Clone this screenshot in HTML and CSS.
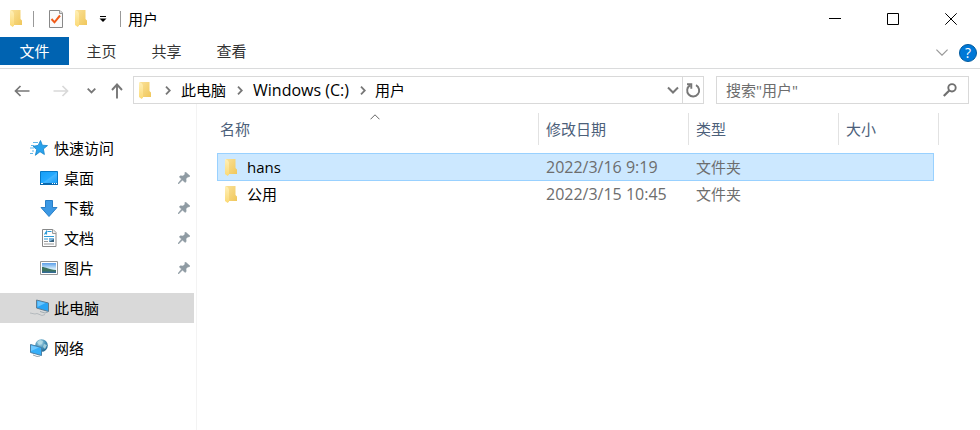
FILE: index.html
```html
<!DOCTYPE html>
<html lang="zh-CN">
<head>
<meta charset="utf-8">
<title>用户</title>
<link rel="stylesheet" href="styles.css">
</head>
<body>
<svg class="defs" aria-hidden="true">
  <defs>
    <linearGradient id="gold" x1="0" y1="0" x2="1" y2="1"><stop offset="0" stop-color="#fae198"/><stop offset="1" stop-color="#f0c75b"/></linearGradient>
    <linearGradient id="flap" x1="0" y1="0" x2="0" y2="1"><stop offset="0" stop-color="#fff0b8"/><stop offset="1" stop-color="#fbd975"/></linearGradient>
    <linearGradient id="blue" x1="0" y1="0" x2="1" y2="1"><stop offset="0" stop-color="#159df5"/><stop offset=".5" stop-color="#25aaff"/><stop offset=".55" stop-color="#43b5ff"/><stop offset="1" stop-color="#139cf8"/></linearGradient>
    <linearGradient id="sky" x1="0" y1="0" x2="0" y2="1"><stop offset="0" stop-color="#5b9ee8"/><stop offset=".6" stop-color="#d9effb"/></linearGradient>
    <radialGradient id="globe" cx=".4" cy=".3" r=".8"><stop offset="0" stop-color="#b9deeb"/><stop offset=".5" stop-color="#4994b9"/><stop offset="1" stop-color="#175b86"/></radialGradient>
    <symbol id="folder" viewBox="0 0 12 17"><path d="M1 0h9.500v9l1.500 1.500V15H3z" fill="url(#gold)"/><path d="M0 0l3 1.500 1 2V15.500L2.700 17 0 15z" fill="url(#flap)"/></symbol>
    <symbol id="pin" viewBox="0 0 12 12"><path d="M7.500 0L12 4l-1 1-1-.2-2 2 .2 2.700-1.200 1L4.500 8 .8 11.800 0 12l.2-.8L3.500 7 1.300 5l1-1.200L5 4l2.200-2L6.700.8z" fill="#8f9ba3" stroke="#8f9ba3" stroke-width=".5"/></symbol>
    <symbol id="right" viewBox="0 0 6 9"><path d="M1 .7l3.800 3.800L1 8.300" fill="none" stroke="#777" stroke-width="1.800"/></symbol>
  </defs>
</svg>
<div class="window">
  <header class="titlebar">
    <svg class="folder" aria-hidden="true"><use href="#folder"/></svg>
    <span class="rule rule-a"></span>
    <button class="plain" aria-label="属性"><svg width="14" height="18" viewBox="0 0 14 18"><path d="M.5.500h10.500l2.500 2.500v14.500H.5z" fill="#fafafa" stroke="#888"/><path d="M10.500.500v3h3" fill="#ddd" stroke="#999"/><path d="M2.500 9l3 3.300L11 5.500" fill="none" stroke="#f05a18" stroke-width="2"/></svg></button>
    <button class="plain new-folder" aria-label="新建文件夹"><svg class="folder"><use href="#folder"/></svg></button>
    <button class="plain customize" aria-label="自定义快速访问工具栏"><svg width="8" height="6" viewBox="0 0 8 6"><path d="M1 .500h6" stroke="#000"/><path d="M.5 2.500h7L4 6z"/></svg></button>
    <span class="rule rule-b"></span>
    <h1>用户</h1>
    <div class="controls">
      <button aria-label="最小化"><svg width="12" height="12" viewBox="0 0 12 12"><path d="M0 5.500h12"/></svg></button>
      <button aria-label="最大化"><svg width="12" height="12" viewBox="0 0 12 12"><path d="M.5.500h11v11H.5z"/></svg></button>
      <button aria-label="关闭"><svg width="12" height="12" viewBox="0 0 12 12"><path d="M.3.300l11.400 11.400M11.700.300L.3 11.700"/></svg></button>
    </div>
  </header>
  <nav class="ribbon" aria-label="功能区">
    <button class="file">文件</button><button>主页</button><button>共享</button><button>查看</button>
    <button class="plain expand" aria-label="展开功能区"><svg width="12" height="7" viewBox="0 0 12 7"><path d="M.4.600L6 6.200 11.600.600" fill="none" stroke="#999" stroke-width="1.200"/></svg></button>
    <button class="help" aria-label="帮助">?</button>
  </nav>
  <div class="toolbar">
    <div class="history">
      <button class="plain back" aria-label="后退"><svg width="16" height="12" viewBox="0 0 16 12"><path d="M15.500 6H1.500M6.500 1l-5 5 5 5" fill="none" stroke="#777" stroke-width="1.700"/></svg></button>
      <button class="plain forward" aria-label="前进"><svg width="16" height="12" viewBox="0 0 16 12"><path d="M.5 6h14M9.500 1l5 5-5 5" fill="none" stroke="#d9d9d9" stroke-width="1.700"/></svg></button>
      <button class="plain recent" aria-label="最近位置"><svg width="9" height="6" viewBox="0 0 9 6"><path d="M.7.700l3.800 3.800L8.300.700" fill="none" stroke="#777" stroke-width="1.800"/></svg></button>
      <button class="plain up" aria-label="向上"><svg width="12" height="16" viewBox="0 0 12 16"><path d="M6 15.500V1.500M1 7l5-5.500L11 7" fill="none" stroke="#777" stroke-width="1.900"/></svg></button>
    </div>
    <nav class="address" aria-label="地址">
      <svg class="folder" aria-hidden="true"><use href="#folder"/></svg>
      <svg class="chevron" aria-hidden="true"><use href="#right"/></svg><a href="#">此电脑</a>
      <svg class="chevron" aria-hidden="true"><use href="#right"/></svg><a href="#" class="latin">Windows (C:)</a>
      <svg class="chevron" aria-hidden="true"><use href="#right"/></svg><a href="#">用户</a>
      <button class="plain drop" aria-label="以前的位置"><svg width="12" height="8" viewBox="0 0 12 8"><path d="M1 1.500l5 5 5-5" fill="none" stroke="#777" stroke-width="2"/></svg></button>
      <button class="refresh" aria-label="刷新"><svg width="16" height="16" viewBox="0 0 16 16"><path d="M11 3.200A6 6 0 1 1 5 3.400M2 2.300H6.300v4.500" fill="none" stroke="#777" stroke-width="1.900"/></svg></button>
    </nav>
    <form class="search">
      <input type="search" aria-label="搜索" placeholder='搜索"用户"'>
      <button type="button" class="plain" aria-label="搜索"><svg width="14" height="14" viewBox="0 0 14 14"><circle cx="9" cy="4.800" r="3.700" fill="none" stroke="#707070" stroke-width="1.900"/><path d="M6.300 7.500L.8 13" stroke="#707070" stroke-width="2.200"/></svg></button>
    </form>
  </div>
  <div class="body">
    <aside class="sidebar">
      <section>
        <a href="#"><svg width="20" height="16" viewBox="0 0 20 16"><path d="M10.500.500l1.800 4.700 5.200.4-4.100 3.300 1 5.600-4.400-2.800-4.600 3.600 1.300-5.700L3 6.300l5.200-.9z" fill="#29a2ec" stroke="#1784c9" stroke-width=".8"/><path d="M3 2.500h5M1 5.500h3M0 8h4M2 11h2M0 13.500h3" stroke="#62b7e9"/></svg>快速访问</a>
        <a href="#" class="child"><svg width="20" height="14" viewBox="0 0 20 14"><path d="M.5.500h17v12.500H.5z" fill="url(#blue)" stroke="#0878c5"/><path d="M0 12h18v2H0z" fill="#0868ae"/><path d="M1 12.500h2m9 0h1m1 0h1m1 0h1" stroke="#fff"/></svg>桌面<svg class="pin"><use href="#pin"/></svg></a>
        <a href="#" class="child"><svg width="20" height="17" viewBox="0 0 20 17"><path d="M5.500.500h7v7H17l-8 9-8-9h4.500z" fill="#3b98e4" stroke="#297fc7"/></svg>下载<svg class="pin"><use href="#pin"/></svg></a>
        <a href="#" class="child"><svg width="20" height="18" viewBox="0 0 20 18"><path d="M2.500.500h10.500l3 3v14H2.500z" fill="#fff" stroke="#888"/><path d="M12.500.500v4H16" fill="#eee" stroke="#999"/><path d="M4.500 5.500l2-3v3m1-3h4M4 7.500h10M4 10h4" stroke="#2c9bd7" stroke-width="1.200" fill="none"/><path d="M4 12.500h4M4 15h10" stroke="#999"/><path d="M9 9h5v4H9z" fill="#7eb5dd"/><path d="M9 13l5-3v3z" fill="#345f79"/></svg>文档<svg class="pin"><use href="#pin"/></svg></a>
        <a href="#" class="child"><svg width="20" height="14" viewBox="0 0 20 14"><path d="M.5.500h17v13H.5z" fill="#fff" stroke="#969696"/><path d="M2 2h14v10H2z" fill="url(#sky)"/><path d="M2 6c4 0 6 2.500 14 3v3H2z" fill="#3d735f"/><path d="M2 10.500h14V12H2z" fill="#346b95"/></svg>图片<svg class="pin"><use href="#pin"/></svg></a>
      </section>
      <section>
        <a href="#" class="selected" aria-current="page"><svg width="20" height="18" viewBox="0 0 20 18"><path d="M6.500 1l12 3v8.500L6.500 9z" fill="#28a4f5" stroke="#607d92"/><path d="M7.500 2l8 2-8 4z" fill="#68c5ff"/><path d="M10 12.500l5 1.500 3-1" fill="none" stroke="#a1adb4"/><path d="M0 14l5 1 2-.5 5 2 3-1" fill="none" stroke="#b4b9bd"/></svg>此电脑</a>
      </section>
      <section>
        <a href="#"><svg width="20" height="18" viewBox="0 0 20 18"><circle cx="11.500" cy="6.500" r="6.300" fill="url(#globe)"/><path d="M7 3l3-2 3 1-1 3-3 1zM14 5l3 1-2 4-2-2z" fill="#b7dce5" opacity=".8"/><path d="M.5 5.500l11 3v8l-11-3z" fill="#36aff9" stroke="#4b7fa4"/><path d="M1 6.500l8 2L1 12z" fill="#70c9ff"/><path d="M3 16l4 1.500 3-.5" fill="none" stroke="#9ba7af"/></svg>网络</a>
      </section>
    </aside>
    <main>
      <table>
        <colgroup><col><col class="date"><col class="type"><col class="size"><col class="edge"></colgroup>
        <thead><tr>
          <th aria-sort="ascending">名称<svg class="sort" width="10" height="6" viewBox="0 0 10 6"><path d="M.5 5.300L5 .800l4.500 4.500" fill="none" stroke="#666"/></svg></th>
          <th>修改日期</th><th>类型</th><th colspan="2">大小</th>
        </tr></thead>
        <tbody>
          <tr class="picked"><td><span class="name"><svg class="folder" aria-hidden="true"><use href="#folder"/></svg>hans</span></td><td class="latin">2022/3/16 9:19</td><td>文件夹</td><td></td></tr>
          <tr><td><span class="name"><svg class="folder" aria-hidden="true"><use href="#folder"/></svg>公用</span></td><td class="latin">2022/3/15 10:45</td><td>文件夹</td><td></td></tr>
        </tbody>
      </table>
    </main>
  </div>
</div>
</body>
</html>
```
FILE: styles.css
```css
* { box-sizing: border-box; }
body { margin: 0; background: #fff; color: #000; font: 15px/20px "Open Sans", "Noto Sans CJK SC", sans-serif; }
button, input { font: inherit; }
button { border: 0; background: none; color: inherit; padding: 0; }
a { color: inherit; text-decoration: none; }
svg { display: block; flex: none; }
.defs { position: absolute; width: 0; height: 0; }
.folder { width: 12px; height: 17px; }
.latin { font-size: 16px; }
.window { display: flex; flex-direction: column; min-height: 100vh; }

.titlebar { display: flex; align-items: center; height: 37px; padding-left: 10px; }
.rule { width: 1px; height: 16px; background: #999; }
.rule-a { margin: 0 15px 0 11px; }
.rule-b { margin: 0 7px 0 13px; }
.new-folder { margin-left: 12px; }
.customize { margin-left: 12px; }
h1 { margin: 0; font-size: 15px; font-weight: 400; }
.controls { display: flex; margin-left: auto; }
.controls button { display: grid; place-items: center; width: 58px; height: 35px; }
.controls path { fill: none; stroke: #000; }

.ribbon { display: flex; align-items: center; height: 32px; padding-right: 3px; border-bottom: 1px solid #dadbdc; color: #333; }
.ribbon button:not(.plain, .help) { width: 65px; height: 28px; align-self: flex-start; }
.ribbon .file:not(.plain) { width: 69px; background: #0063b1; color: #fff; }
.expand { margin-left: auto; }
.help { width: 18px; height: 18px; margin-left: 11px; border: 1px solid #005a9e; border-radius: 50%; background: #0078d7; color: #fff; font-size: 14px; line-height: 16px; }

.toolbar { display: flex; height: 35px; padding: 7px 11px 0 14px; }
.history { display: flex; align-items: center; width: 119px; padding-top: 2px; }
.forward { margin-left: 23px; }
.recent { margin-left: 18px; }
.up { margin-left: 15px; }
.address { display: flex; align-items: center; flex: 1; height: 28px; padding-left: 5px; border: 1px solid #d9d9d9; }
.chevron { width: 6px; height: 9px; margin: 0 9px 0 11px; }
.address > .folder + .chevron { margin-left: 14px; margin-right: 10px; }
.address .latin { margin-left: 1px; }
.drop { margin-left: auto; margin-right: 3px; }
.refresh { display: grid; place-items: center; width: 21px; height: 26px; border-left: 1px solid #d9d9d9; }
.search { display: flex; align-items: center; width: 253px; height: 28px; margin-left: 12px; padding: 0 11px 0 9px; border: 1px solid #d9d9d9; }
.search input { flex: 1; min-width: 0; padding: 0; border: 0; outline: 0; background: none; }
.search input::placeholder { color: #6d6d6d; opacity: 1; }

.body { display: flex; flex: 1; }
.sidebar { width: 197px; padding: 29px 2px 0 0; border-right: 1px solid #f3f3f3; }
.sidebar section { margin-bottom: 10px; }
.sidebar a { display: flex; align-items: center; gap: 4px; height: 30px; padding: 0 4px 0 30px; }
.sidebar .child { padding-left: 40px; }
.pin { width: 12px; height: 12px; margin-left: auto; }
.sidebar .selected { background: #d9d9d9; }

main { flex: 1; padding: 9px 41px 0 20px; }
table { width: 100%; table-layout: fixed; border-spacing: 0; }
.date, .type { width: 150px; }
.size { width: 95px; }
.edge { width: 5px; }
th { position: relative; height: 32px; padding: 0 7px; border-right: 1px solid #e2e2e2; color: #4c607a; font-weight: 400; text-align: left; }
th:first-child { padding-left: 3px; }
.sort { position: absolute; top: 1px; left: 50%; margin-left: -7px; }
tbody::before { content: ""; display: block; height: 8px; }
td { height: 26px; padding: 0 7px; color: #6d6d6d; }
td:first-child { padding-left: 8px; color: #000; }
.name { display: flex; align-items: center; gap: 10px; }
.picked td { height: 28px; border: solid #99d1ff; border-width: 1px 0; background: #cce8ff; }
.picked td:first-child { border-left-width: 1px; padding-left: 7px; }
.picked td:last-child { border-right-width: 1px; }
```
